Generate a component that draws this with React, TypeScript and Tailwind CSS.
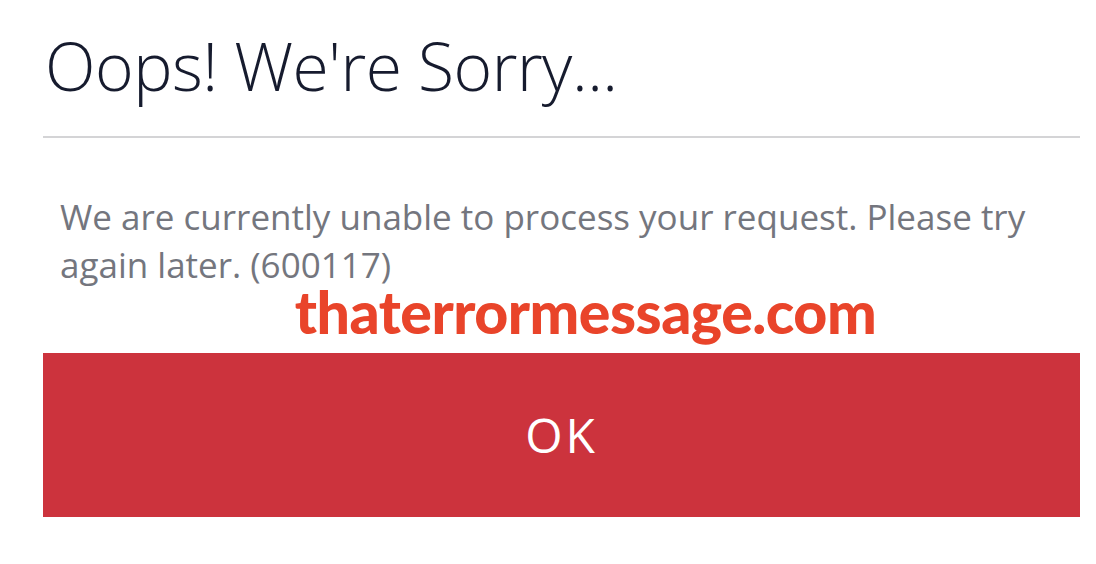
export default function App() {
  return (
    <div className="w-[1096px] h-[564px] bg-white overflow-hidden">
      <div className="pl-[43px] pr-[16px] pt-[17px]">
        <h1 className="pl-[2px] text-[66px] leading-[96px] font-light tracking-[-0.5px] text-[#161b2e] font-['Open_Sans',sans-serif]">
          Oops! We're Sorry...
        </h1>
        <div className="mt-[23px] h-[2px] w-[1037px] bg-[#d4d4d6]"></div>
        <p className="mt-[55px] pl-[17px] pr-[30px] text-[35px] leading-[48px] text-[#74767e] font-['Open_Sans',sans-serif]">
          We are currently unable to process your request. Please try again later. (600117)
        </p>
        <div className="w-[1037px] flex justify-center pl-[48px]">
          <span className="text-[59px] leading-[46px] font-black text-[#e9442a] tracking-[-0.5px] font-['Lato',sans-serif]">
            thaterrormessage.com
          </span>
        </div>
        <button className="mt-[18px] w-[1037px] h-[164px] bg-[#cc333d] flex items-center justify-center">
          <span className="text-[48px] text-white tracking-[3px] font-['Open_Sans',sans-serif]">OK</span>
        </button>
      </div>
    </div>
  )
}
